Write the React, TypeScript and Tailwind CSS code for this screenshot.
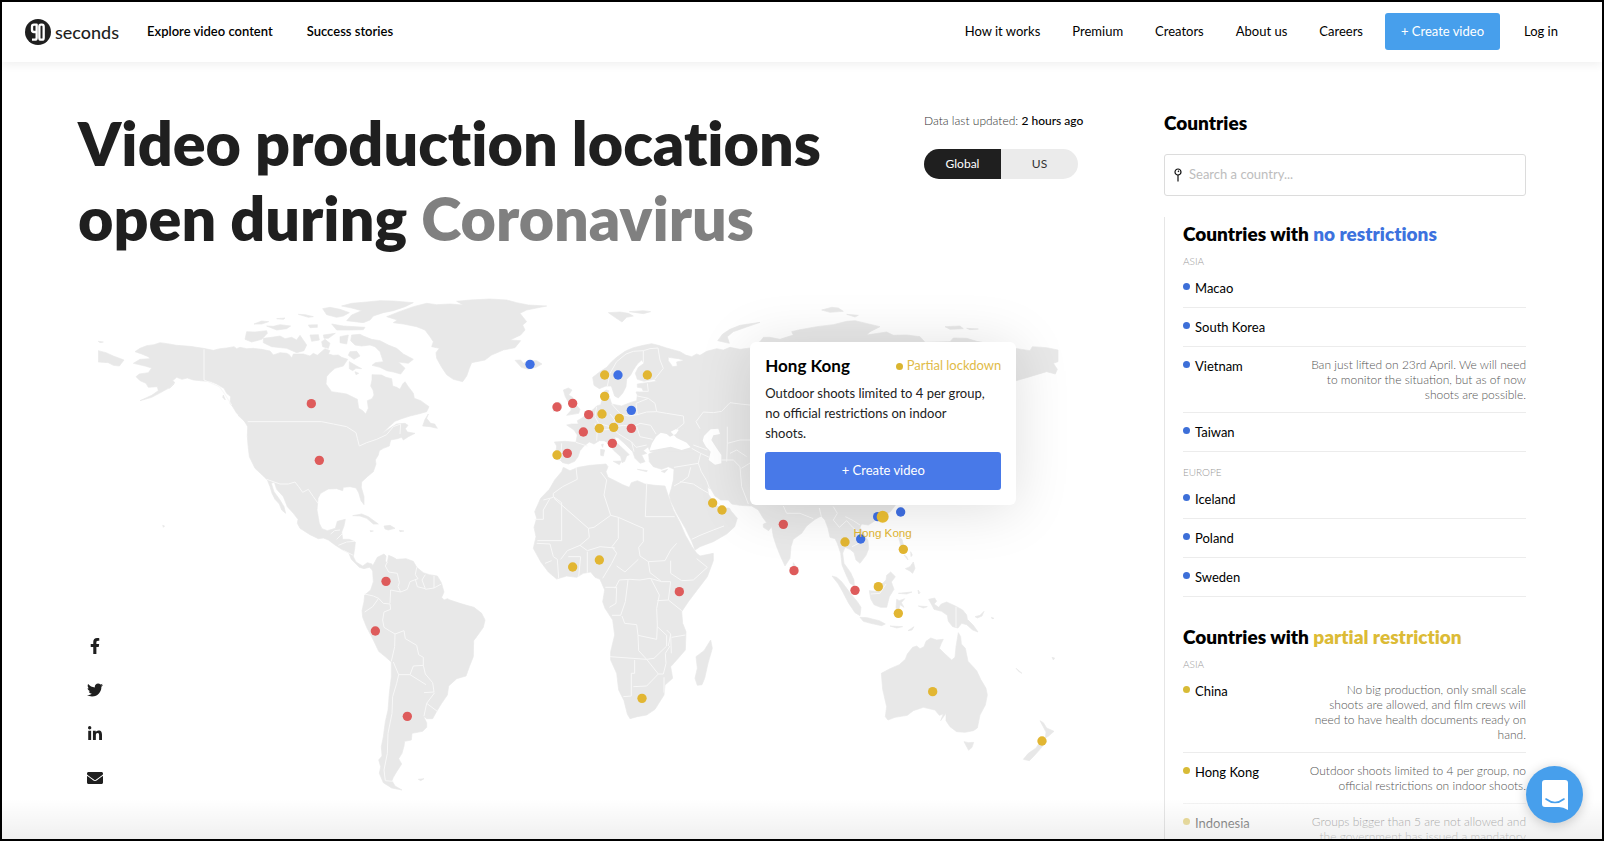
import { useState } from "react";
import { FaEnvelope, FaFacebookF, FaLinkedinIn, FaTwitter } from "react-icons/fa";

type Status = "none" | "partial" | "locked";

const pinColors: Record<Status, string> = {
  none: "#3f70e4",
  partial: "#e2b632",
  locked: "#de5b5b",
};

const pins: { x: number; y: number; status: Status }[] = [
  { x: 640, y: 341, status: "locked" },
  { x: 664, y: 511, status: "locked" },
  { x: 864, y: 874, status: "locked" },
  { x: 832, y: 1023, status: "locked" },
  { x: 928, y: 1279, status: "locked" },
  { x: 1296, y: 223, status: "none" },
  { x: 1520, y: 255, status: "partial" },
  { x: 1560, y: 255, status: "none" },
  { x: 1648, y: 255, status: "partial" },
  { x: 1520, y: 319, status: "partial" },
  { x: 1377, y: 351, status: "locked" },
  { x: 1424, y: 340, status: "locked" },
  { x: 1472, y: 374, status: "locked" },
  { x: 1512, y: 372, status: "partial" },
  { x: 1564, y: 385, status: "partial" },
  { x: 1600, y: 361, status: "none" },
  { x: 1456, y: 426, status: "locked" },
  { x: 1504, y: 415, status: "partial" },
  { x: 1547, y: 412, status: "partial" },
  { x: 1600, y: 415, status: "locked" },
  { x: 1543, y: 460, status: "locked" },
  { x: 1377, y: 495, status: "partial" },
  { x: 1408, y: 490, status: "locked" },
  { x: 1844, y: 639, status: "partial" },
  { x: 1872, y: 660, status: "partial" },
  { x: 2056, y: 703, status: "locked" },
  { x: 1424, y: 831, status: "partial" },
  { x: 1504, y: 810, status: "partial" },
  { x: 1744, y: 905, status: "locked" },
  { x: 1632, y: 1225, status: "partial" },
  { x: 2339, y: 680, status: "none" },
  { x: 2408, y: 666, status: "none" },
  { x: 2288, y: 747, status: "none" },
  { x: 2241, y: 756, status: "partial" },
  { x: 2416, y: 778, status: "partial" },
  { x: 2088, y: 842, status: "locked" },
  { x: 2271, y: 901, status: "locked" },
  { x: 2341, y: 890, status: "partial" },
  { x: 2401, y: 970, status: "partial" },
  { x: 2504, y: 1205, status: "partial" },
  { x: 2832, y: 1353, status: "partial" },
];

const sections = [
  {
    highlight: "no restrictions",
    color: "text-[#3d72de]",
    dot: "bg-[#3d6fd8]",
    regions: [
      {
        name: "ASIA",
        countries: [
          { name: "Macao", note: "" },
          { name: "South Korea", note: "" },
          {
            name: "Vietnam",
            note: "Ban just lifted on 23rd April. We will need\nto monitor the situation, but as of now\nshoots are possible.",
          },
          { name: "Taiwan", note: "" },
        ],
      },
      {
        name: "EUROPE",
        countries: [
          { name: "Iceland", note: "" },
          { name: "Poland", note: "" },
          { name: "Sweden", note: "" },
        ],
      },
    ],
  },
  {
    highlight: "partial restriction",
    color: "text-[#dcbb36]",
    dot: "bg-[#d8bb36]",
    regions: [
      {
        name: "ASIA",
        countries: [
          {
            name: "China",
            note: "No big production, only small scale\nshoots are allowed, and film crews will\nneed to have health documents ready on\nhand.",
          },
          {
            name: "Hong Kong",
            note: "Outdoor shoots limited to 4 per group, no\nofficial restrictions on indoor shoots.",
          },
          {
            name: "Indonesia",
            note: "Groups bigger than 5 are not allowed and\nthe government has issued a mandatory",
          },
        ],
      },
    ],
  },
];

function Logo() {
  return (
    <a href="#" className="flex items-center gap-1" aria-label="90 seconds">
      <svg viewBox="0 0 78 78" className="size-[26px]">
        <circle cx="39" cy="39" r="39" fill="#1f1f1f" />
        <g fill="none" stroke="#fff" strokeWidth="7" strokeLinejoin="round">
          <path d="M34 39H27Q21 39 21 33V23Q21 17 27 17H35V56Q35 62 29 62H21" />
          <path d="M48 17H51Q56 17 56 23V56Q56 62 51 62H48Q43 62 43 56V23Q43 17 48 17Z" />
        </g>
      </svg>
      <span className="text-lg leading-6 font-medium text-[#1f1f1f]">seconds</span>
    </a>
  );
}

function Header() {
  return (
    <header className="relative z-10 flex h-[60px] shrink-0 items-center bg-white pb-px pl-[23px] pr-[44px] text-[13px] text-black shadow-[0_2px_10px_rgba(0,0,0,0.07)]">
      <Logo />
      <nav className="ml-7 flex gap-[34px] font-semibold">
        <a href="#">Explore video content</a>
        <a href="#">Success stories</a>
      </nav>
      <nav className="ml-auto flex items-center gap-8">
        <a href="#">How it works</a>
        <a href="#">Premium</a>
        <a href="#">Creators</a>
        <a href="#">About us</a>
        <a href="#">Careers</a>
      </nav>
      <button className="ml-[22px] mr-6 h-[37px] w-[115px] rounded-[3px] bg-[#479fec] text-white">
        + Create video
      </button>
      <a href="#">Log in</a>
    </header>
  );
}

function WorldMap() {
  return (
    <svg viewBox="0 0 2886 1530" className="block w-full" role="img" aria-label="World map">
      {/* Americas and Greenland */}
      <g transform="translate(-54 -30)">
        <g fill="#e8e8e8" stroke="#e8e8e8" strokeWidth="2" strokeLinejoin="round">
          <path d="M165 215L180 205L200 197L222 194L240 188L262 191L290 196L330 199L370 205L400 211L420 206L440 204L462 200L470 206L480 202L500 206L520 205L545 208L570 213L580 225L600 218L620 220L628 224L635 234L640 222L670 222L690 228L700 220L712 226L735 206L750 212L745 222L760 226L775 225L785 232L803 238L790 258L765 265L748 280L740 290L738 312L755 335L775 338L800 342L832 358L836 385L848 392L857 402L865 385L862 362L876 356L882 345L879 330L872 318L876 300L876 284L905 285L918 292L935 296L938 318L950 322L960 328L968 312L975 305L985 320L1000 340L1003 355L1022 362L1047 380L1040 395L1015 402L990 408L965 416L945 424L925 442L905 462L925 448L950 432L975 430L984 436L976 446L982 456L1005 460L985 470L970 480L965 472L952 476L932 480L928 498L910 505L898 512L895 525L886 540L888 552L880 575L862 590L845 606L844 622L852 650L852 674L843 662L836 638L828 624L810 620L790 622L788 632L770 626L745 627L722 640L714 655L711 690L718 730L726 746L742 752L766 745L772 724L796 718L792 738L785 756L788 778L808 778L826 786L824 806L820 830L828 846L848 858L862 848L876 852L880 872L868 862L852 866L838 862L814 838L806 818L785 808L765 795L745 780L730 774L715 776L690 764L660 745L652 730L654 718L640 700L622 680L610 650L590 628L583 606L574 610L582 635L600 660L612 680L617 700L605 690L598 672L585 658L576 640L570 620L562 600L552 590L525 565L508 530L504 495L502 470L503 440L490 418L470 400L458 380L450 370L452 350L440 340L432 325L410 312L390 304L370 303L340 300L322 294L306 298L290 292L278 302L285 308L265 325L238 340L215 352L180 362L215 346L235 332L232 320L205 322L198 310L180 302L168 290L178 282L205 278L215 264L195 258L160 250L180 238L210 236L205 230L185 222Z" />
          <path d="M55 212L78 218L100 228L132 240L118 258L100 256L85 248L55 246ZM55 184L70 186L60 188Z" />
          <path d="M500 155L525 156L560 152L562 160L545 178L515 186L495 178ZM550 175L575 172L600 168L615 176L635 172L650 180L660 166L680 195L672 212L650 218L620 205L575 200L550 188ZM560 138L580 139L600 134L632 138L620 146L590 150ZM522 132L545 123L566 125L545 132ZM655 103L675 104L700 110L685 112ZM685 135L712 134L712 142L690 143ZM590 116L615 114L610 118ZM755 132L790 138L855 142L850 149L810 150L770 150ZM690 165L715 164L718 180L695 184ZM730 165L766 160L745 175L732 175ZM725 185L735 178L750 190L745 205L728 200ZM780 170L805 165L800 192L780 188Z" />
          <path d="M815 165L840 163L850 168L875 178L900 182L925 195L950 205L970 222L1000 238L985 250L955 246L975 265L962 282L940 276L920 272L900 262L876 256L886 248L910 245L900 215L885 200L870 195L845 198L825 195L812 182ZM808 245L830 258L845 266L828 265L818 272L808 266ZM785 78L815 70L860 66L900 62L940 63L1000 68L975 80L940 92L910 98L880 108L870 120L850 128L800 122L815 105L845 92L815 84ZM728 86L750 82L780 88L808 98L790 108L770 112L740 104ZM810 215L830 214L840 228L822 238L805 226ZM825 275L836 280L828 284Z" />
          <path d="M920 110L950 98L1000 80L1040 70L1070 74L1110 72L1150 75L1130 64L1170 60L1230 57L1280 60L1310 68L1345 75L1400 78L1340 90L1320 100L1340 125L1328 135L1335 150L1322 165L1290 180L1322 182L1305 203L1270 210L1235 225L1215 240L1175 248L1168 265L1160 288L1148 305L1120 298L1100 284L1085 262L1070 235L1068 218L1078 205L1055 200L1060 185L1050 170L1035 150L1010 140L970 132L940 128L952 120Z" />
          <path d="M1045 402L1040 415L1052 430L1064 432L1072 445L1050 440L1028 438L1035 418ZM818 707L845 702L865 710L895 732L880 732L860 715L840 708ZM912 738L930 736L945 745L925 750L915 747ZM870 752L880 753L872 755ZM958 751L972 753L960 755ZM474 406L490 412L514 432L500 430ZM248 736L254 738L250 742ZM266 325L282 312L270 324ZM430 345L436 360L428 352Z" />
        </g>
        <g transform="translate(660 780)" fill="#e8e8e8" stroke="#e8e8e8" strokeWidth="2" strokeLinejoin="round">
          <path d="M212 72L218 78L232 52L252 42L258 48L256 64L262 68L266 46L280 52L290 58L318 56L340 64L350 82L370 98L388 104L412 108L424 128L432 156L425 172L432 180L442 176L450 180L480 190L500 196L522 202L545 220L555 240L550 262L530 290L521 302L520 350L508 380L498 408L470 416L446 438L442 465L425 490L410 514L398 536L380 536L370 528L380 548L380 562L368 574L336 580L334 600L314 604L312 618L306 640L296 656L305 672L290 695L280 712L276 722L285 738L306 750L275 744L250 728L238 700L242 680L236 660L246 648L244 620L250 590L256 545L264 510L268 460L274 410L274 366L258 352L236 334L220 300L200 262L188 232L186 212L192 185L194 165L212 150L220 125L218 95Z" />
          <path d="M355 718L372 716L362 722Z" />
        </g>
        <g fill="none" stroke="#f8f8f8" strokeWidth="3" strokeLinejoin="round">
          <path d="M372 208V300L400 312L418 320L436 345L455 375M503 425H725L760 432L800 440L828 458L832 475L838 498L860 488L890 478L920 464L940 440L962 432L960 462M560 598L600 612L625 612L645 606L656 620L668 637L685 628L700 650L714 670M752 762L764 752L780 750M770 778L786 762M775 796L800 786L824 784M792 812L820 826" />
          <path
            transform="translate(660 780)"
            d="M262 66L256 78L266 96L292 100L298 128L294 140L302 156L272 150L270 190M350 82L346 104L354 116L330 125L322 148L302 156M376 104L366 120L376 146L352 140L346 118M402 108L402 144L376 148M402 144L424 132M194 162L220 168L236 175L250 190L270 192L272 208L252 216L248 240L252 262L268 272L285 282M236 175L218 200L194 216M285 282L284 320L274 364M285 282L312 272L316 296L350 316L356 344L370 352V376L340 378L330 404L296 404L280 366M370 376L376 402L398 428L402 456L372 458M330 404L378 434M296 404L290 430L278 470L276 520L264 580L262 640L252 690L256 722L280 724M404 458L380 490L372 528M380 490L412 514"
          />
        </g>
      </g>

      {/* Europe, Africa and Asia */}
      <g transform="translate(1206 -30)">
        <g fill="#e8e8e8" stroke="#e8e8e8" strokeWidth="2" strokeLinejoin="round">
          <path d="M188 548L180 540L166 538L168 515L170 498L163 486L195 484L228 487L232 465L222 450L200 435L215 432L235 432L232 422L250 412L262 396L278 390L290 378L302 374L308 352L306 340L318 330L326 332L322 345L330 356L335 372L365 378L390 368L410 362L412 345L408 336L430 334L426 324L412 322L412 312L440 308L470 304L462 298L432 304L412 298L406 280L415 262L432 250L425 240L412 252L400 270L392 285L380 298L378 320L368 340L355 354L344 348L334 318L318 318L298 326L282 316L278 292L300 275L320 262L335 245L350 232L375 214L400 203L430 196L455 191L475 196L500 204L540 215L562 228L560 242L535 236L505 232L505 242L518 260L532 258L530 246L548 242L560 226L575 230L590 222L600 226L620 214L650 206L670 210L690 202L720 208L750 204L780 185L790 172L810 172L840 178L880 165L875 155L895 150L950 140L1000 134L1040 124L1065 122L1090 128L1140 140L1110 155L1100 165L1160 156L1180 166L1220 165L1260 170L1275 187L1350 185L1360 174L1400 175L1430 184L1545 205L1590 212L1597 200L1640 203L1674 210V245L1660 250L1672 268L1666 282L1640 275L1610 284L1590 290L1545 303L1480 420L1300 480L1240 600L1185 677L1172 694L1148 712L1125 722L1105 735L1085 732L1080 742L1092 762L1104 782L1106 806L1098 826L1080 850L1068 840L1062 818L1050 808L1035 802L1028 820L1032 850L1052 878L1062 900L1063 918L1050 910L1038 884L1026 855L1022 820L1012 790L1005 776L990 772L984 745L975 720L964 708L945 718L920 738L905 760L880 778L873 800L870 835L855 858L842 830L830 800L820 770L815 740L806 752L790 742L790 732L800 728L788 712L775 690L755 678L720 676L695 672L685 660L662 660L645 648L632 626L622 622L626 644L648 676L660 684L688 684L694 694L712 715L704 740L680 762L640 785L600 800L585 810L576 786L556 745L530 700L512 662L508 645L514 625L520 600L522 568L505 560L485 568L460 560L448 545L446 522L466 514L500 505L520 500L445 500L430 512L440 520L425 525L435 545L420 550L405 535L398 515L375 492L355 474L344 470L348 486L368 505L388 524L380 528L374 544L366 548L362 530L340 510L326 490L312 482L298 482L282 492L268 486L252 498L240 512L234 530L224 544L205 552Z" />
          <path d="M440 490L470 470L530 445L600 450L580 512L500 512L450 515Z" />
          <path d="M190 562L210 572L235 562L270 556L318 552L324 560L318 575L324 592L345 602L368 614L388 622L394 608L412 602L435 612L465 616L495 618L504 645L520 690L540 728L556 765L576 800L590 820L600 828L640 820L640 842L622 890L590 932L565 965L545 995L548 1030L558 1055L556 1110L530 1140L512 1160L518 1195L495 1215L492 1245L465 1288L440 1305L412 1310L390 1316L382 1302L372 1262L356 1230L350 1180L332 1140L332 1115L344 1065L338 1020L315 985L308 965L314 930L300 898L285 892L272 876L250 880L230 892L200 888L170 897L145 876L122 845L100 805L108 770L102 742L110 715L104 695L122 655L148 628L164 600L185 575Z" />
          <path d="M632 1080L637 1105L624 1150L614 1195L606 1214L592 1216L585 1195L592 1165L588 1130L612 1112Z" />
          <path d="M190 330L205 324L216 330L206 345L218 352L226 372L240 388L236 400L200 406L214 390L206 368L196 350ZM160 375L178 366L186 375L182 390L160 394ZM45 241L62 240L70 250L88 242L110 242L126 252L108 262L84 268L64 262ZM325 98L360 96L385 100L400 108L380 112L366 126L345 112ZM388 95L430 92L452 95L430 101ZM653 182L668 162L690 148L720 136L780 127L740 141L700 155L682 170L688 190ZM302 508L314 510L310 528L302 526ZM304 494L310 492L308 502ZM340 544L364 543L358 554ZM412 568L442 572L440 575ZM484 574L503 568L494 578ZM965 90L995 82L1015 84L1030 94L990 97ZM1040 103L1075 106L1065 111ZM1335 140L1380 138L1390 146L1350 148ZM1400 145L1435 147L1410 149Z" />
        </g>
        <g fill="#fff">
          <path d="M448 512L456 490L468 470L482 458L500 462L510 470L528 462L536 450L530 446L512 455L530 474L560 488L572 502L545 510L512 500L480 506Z" />
          <path d="M612 468L632 448L655 446L660 462L640 466L634 480L650 505L664 525L664 550L645 554L626 540L632 515L618 500L608 482Z" />
        </g>
        <g fill="none" stroke="#f8f8f8" strokeWidth="3" strokeLinejoin="round">
          <path d="M322 318L330 280L350 245L378 222L400 214L430 212L450 206L474 204M474 204L480 240L490 265L464 298M430 212L430 248M335 372L362 402L385 408L412 404L408 370M290 380L285 410L296 430L330 440L345 420L330 402M228 487L262 498M185 490L182 540M285 430L292 450L290 482M345 440L370 436L400 440L420 430L452 436M300 450L340 448L356 462L395 486L402 515M412 404L440 396L470 395L500 400L550 408L552 430L528 450M408 370L445 355L465 370L470 395M412 348L445 355M415 334L445 334L442 310M395 486L408 502L440 495M410 440L420 470L458 478M452 436L468 462M600 446L588 425L610 396L640 398L665 394L690 368L720 372L750 375" />
          <path d="M682 440L682 490L680 545M664 540L700 540L720 560L725 620L745 672M682 490L720 480L750 480M575 505L602 520L595 550L522 562M595 550L604 575L620 602L628 624M522 618L545 605L565 590L572 562M540 605L580 612L605 628L626 640M575 778L600 766L640 750L672 738M580 495L622 510M602 520L628 532M690 520L710 510L740 530M724 565L752 548M655 670L672 684" />
          <path d="M228 562L232 598L188 620L160 640V652L130 660M160 650L185 668V782H112M104 718H130V690L150 655M162 655L265 745L282 742L332 706L312 645L320 600L302 576M332 706L355 712L430 745M440 612L436 710H524M430 745V785L416 802L420 828M355 712V775L336 800L350 820L335 850L308 895M265 745L268 772L240 796L202 812L182 838M240 796L262 812L300 800L345 804M262 815L262 878M205 830H242L236 890M172 838L176 895M110 790L150 792L160 830L172 838M135 850L155 842M420 828L445 845L495 842L512 810L530 790M512 842L512 880L545 902L580 900L622 862L590 836M445 845L450 878L485 905L512 905L505 960M350 858L375 876L415 838M345 925L358 900L390 898L420 900L450 895L485 905M384 900L376 965L362 1006H336M452 895L478 945L470 985L472 1035L470 1078L414 1066L410 1034L374 1030L366 1008M316 922H350L348 970L328 982M330 1130L440 1138L416 1112L414 1066M440 1138L462 1135L500 1098V1066L472 1040M404 1140V1180H394V1248L370 1250M440 1138L475 1182L440 1218L400 1220M510 1098L496 1120L498 1150L490 1182L475 1182M492 1192V1238M472 962L505 960L545 992M515 1072L556 1065M500 1050L512 1062L514 1120M505 1098L512 1062" />
          <path d="M958 684L964 710M1000 680L1012 700L1000 720L1018 742M1018 742L1040 722L1058 742L1074 756L1084 786L1056 800M1036 710L1060 722L1080 735M850 678L860 700L900 700L940 716" />
        </g>
      </g>

      {/* South East Asia and Oceania */}
      <g transform="translate(2046 630)">
        <g fill="#e8e8e8" stroke="#e8e8e8" strokeWidth="2" strokeLinejoin="round">
          <path d="M156 228L170 232L185 245L200 265L215 285L232 305L243 322L240 347L225 338L205 308L188 275L175 252ZM240 352L262 353L280 358L298 362L316 372L305 377L272 370L250 364ZM268 272L288 274L300 258L318 240L320 226L332 216L346 230L334 246L342 268L328 290L320 322L302 322L282 314L272 296ZM350 298L358 302L374 296L364 308L372 322L360 314L356 332L348 325ZM355 280L396 276L380 282ZM356 112L366 118L372 142L362 136ZM372 165L380 170L384 180ZM392 155L397 165L393 170ZM376 206L390 200L400 186L405 205L398 220L388 212ZM330 378L368 380L350 384ZM384 392L402 380L396 390ZM415 318L442 320L430 324ZM414 270L420 278L416 282Z" />
          <path d="M446 298L464 294L470 304L462 312L476 322L484 312L500 306L526 318L548 330L560 345L562 358L580 376L594 396L578 390L560 374L545 370L534 384L518 380L505 364L502 346L485 334L462 328L456 316ZM585 350L600 346L612 334L606 348L592 354Z" />
          <path d="M304 520L330 506L358 494L376 478L382 462L398 442L410 438L420 446L432 440L438 424L452 414L470 420L490 418L484 430L478 445L495 462L515 480L525 472L528 440L535 398L542 410L544 432L556 445L564 484L590 512L602 538L618 565L622 585L616 615L600 645L592 684L580 692L555 697L530 695L510 680L498 662L498 640L482 662L490 642L478 646L465 630L430 622L400 632L382 646L345 652L324 660L316 650L320 620L308 568Z" />
          <path d="M552 725L566 728L581 727L576 742L566 751ZM780 662L790 668L800 684L822 694L806 708L796 714L798 696ZM785 718L800 724L780 748L762 768L748 782L730 778L745 760L768 744ZM816 472L824 474L820 480ZM708 505L726 520L718 516ZM845 456L850 458L846 459ZM634 352L642 355L636 356ZM40 188L50 204L48 220L38 214ZM362 22L368 28L360 42Z" />
        </g>
        <path d="M528 320V382M272 282L300 280L318 252" fill="none" stroke="#f8f8f8" strokeWidth="3" />
      </g>

      {pins.map((pin) => (
        <circle key={`${pin.x}-${pin.y}`} cx={pin.x} cy={pin.y} r="14" fill={pinColors[pin.status]} />
      ))}

      {/* Selected location */}
      <circle cx="2354" cy="680" r="18" fill="#edc032" />
      <text
        x="2354"
        y="741"
        textAnchor="middle"
        fontFamily="'Liberation Sans', sans-serif"
        fontSize="35"
        fill="#e2b632"
      >
        Hong Kong
      </text>
    </svg>
  );
}

function LocationCard() {
  return (
    <div className="absolute left-[67.8%] top-[10.2%] w-[266px] rounded-md bg-white px-[15px] pb-[15px] pt-3 shadow-[0_4px_56px_rgba(0,0,0,0.13)]">
      <div className="flex items-center justify-between">
        <h3 className="text-[17px] leading-6 font-bold text-black">Hong Kong</h3>
        <span className="flex items-center gap-1 text-[13px] text-[#dfbb48]">
          <span className="size-[7px] rounded-full bg-[#dab52f]" />
          Partial lockdown
        </span>
      </div>
      <p className="mt-[5px] text-[13px] leading-5 whitespace-pre-line text-[#222]">
        {"Outdoor shoots limited to 4 per group,\nno official restrictions on indoor\nshoots."}
      </p>
      <button className="mt-[9px] h-[38px] w-full rounded-[3px] bg-[#4879e8] text-[13px] text-white">
        + Create video
      </button>
    </div>
  );
}

function Socials() {
  return (
    <div className="flex flex-col items-center gap-7 text-[#1f1f1f]">
      <a href="#" aria-label="Facebook"><FaFacebookF className="size-4" /></a>
      <a href="#" aria-label="Twitter"><FaTwitter className="size-4" /></a>
      <a href="#" aria-label="LinkedIn"><FaLinkedinIn className="size-4" /></a>
      <a href="#" aria-label="Email"><FaEnvelope className="size-4" /></a>
    </div>
  );
}

function CountryList() {
  return (
    <aside className="mr-[76px] flex w-[362px] shrink-0 flex-col pt-[49px] text-black">
      <h2 className="text-[19px] leading-6 font-extrabold">Countries</h2>
      <div className="mt-[19px] flex h-[42px] shrink-0 items-center gap-[7px] rounded-[3px] border border-[#dcdcdc] pl-[9px]">
        <svg viewBox="0 0 8 14" className="h-[14px] w-2" fill="none" stroke="#111" strokeWidth="1.2">
          <circle cx="4" cy="4" r="3" />
          <path d="M4 7V13.5M4 4L5 2.6" />
        </svg>
        <input
          type="text"
          aria-label="Search a country"
          placeholder="Search a country..."
          className="min-w-0 flex-1 text-[13px] outline-none placeholder:text-[#bdbdbd]"
        />
      </div>
      <div className="relative mt-[21px] min-h-0 flex-1 overflow-hidden border-l border-[#e6e6e6] pl-[18px] pt-[5px]">
        {sections.map((section) => (
          <section key={section.highlight} className="mb-7">
            <h3 className="text-[19px] leading-6 font-extrabold [font-variant-ligatures:none]">
              Countries with <span className={section.color}>{section.highlight}</span>
            </h3>
            {section.regions.map((region, i) => (
              <div key={region.name} className={i === 0 ? "mt-2" : "mt-[13px]"}>
                <h4 className="text-[10px] leading-[15px] font-light text-[#999]">{region.name}</h4>
                <ul>
                  {region.countries.map((country) => (
                    <li key={country.name} className="flex justify-between border-b border-[#ececec] py-[10px]">
                      <span className="flex h-[18px] items-center gap-[5px] text-[13px] leading-[18px]">
                        <span className={`mb-1 size-[7px] rounded-full ${section.dot}`} />
                        {country.name}
                      </span>
                      {country.note && (
                        <p className="text-right text-xs leading-[15px] font-light whitespace-pre-line text-[#555]">
                          {country.note}
                        </p>
                      )}
                    </li>
                  ))}
                </ul>
              </div>
            ))}
          </section>
        ))}
        <div className="absolute inset-x-0 bottom-0 h-10 bg-linear-to-b from-white/30 to-white/70" />
      </div>
    </aside>
  );
}

export default function App() {
  const [scope, setScope] = useState<"Global" | "US">("Global");

  return (
    <div className="relative flex h-screen flex-col overflow-hidden border-2 border-black bg-white font-['Lato',sans-serif]">
      <Header />
      <main className="flex min-h-0 flex-1">
        <div className="min-w-0 flex-1 pt-[43px]">
          <div className="flex justify-between pl-[76px] pr-[86px]">
            <h1 className="text-[61px] leading-[75px] font-extrabold text-[#1f1f1f] [font-variant-ligatures:none]">
              Video production locations
              <br />
              open during <span className="text-[#808080]">Coronavirus</span>
            </h1>
            <div className="w-[154px] shrink-0 pt-2">
              <p className="text-xs leading-4 font-light whitespace-nowrap text-[#333]">
                Data last updated: <span className="font-medium text-black">2 hours ago</span>
              </p>
              <div className="mt-5 flex h-[30px] overflow-hidden rounded-full bg-[#ebebeb] text-xs">
                {(["Global", "US"] as const).map((s) => (
                  <button
                    key={s}
                    onClick={() => setScope(s)}
                    className={`flex-1 ${scope === s ? "bg-[#1f1f1f] text-white" : "text-[#333]"}`}
                  >
                    {s}
                  </button>
                ))}
              </div>
            </div>
          </div>

          <div className="mt-[35px] grid pl-[85px] pr-[104px]">
            <div className="relative col-start-1 row-start-1 ml-[11px] self-start">
              <WorldMap />
              <LocationCard />
            </div>
            <div className="col-start-1 row-start-1 self-end justify-self-start pb-[14px]">
              <Socials />
            </div>
          </div>
        </div>
        <CountryList />
      </main>
      <div className="pointer-events-none absolute inset-x-0 bottom-0 h-10 bg-linear-to-b from-transparent to-black/6" />
      <button
        aria-label="Open chat"
        className="absolute bottom-4 right-[19px] flex size-[57px] items-center justify-center rounded-full bg-[#479fec] shadow-[0_2px_12px_rgba(0,0,0,0.2)]"
      >
        <svg viewBox="0 0 28 32" className="h-8 w-7">
          <path d="M4 1H24Q27 1 27 4V31Q22 28 18 28H4Q1 28 1 25V4Q1 1 4 1Z" fill="#fff" />
          <path d="M5 20Q14 27 23 20" fill="none" stroke="#479fec" strokeWidth="1.6" strokeLinecap="round" />
        </svg>
      </button>
    </div>
  );
}
